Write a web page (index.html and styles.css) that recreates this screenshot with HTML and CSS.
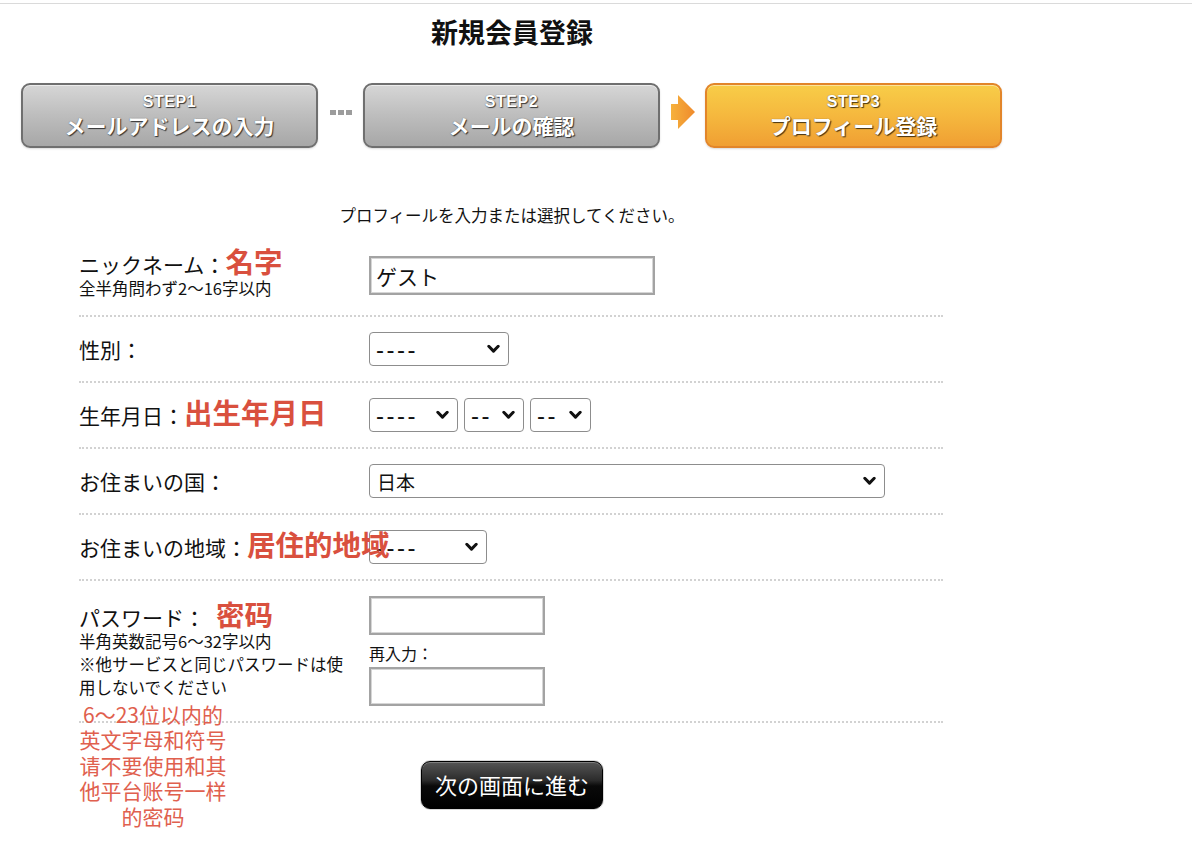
FILE: index.html
```html
<!DOCTYPE html>
<html lang="ja">
<head>
<meta charset="utf-8">
<title>新規会員登録</title>
<link rel="stylesheet" href="styles.css">
</head>
<body>
<div class="topline"></div>
<div class="page">
  <h1 class="title">新規会員登録</h1>

  <div class="steps">
    <div class="step">
      <span class="step-no">STEP1</span>
      <span class="step-name">メールアドレスの入力</span>
    </div>
    <div class="sep sep-dots"><i></i><i></i><i></i></div>
    <div class="step">
      <span class="step-no">STEP2</span>
      <span class="step-name">メールの確認</span>
    </div>
    <div class="sep sep-arrow">
      <svg width="24" height="34" viewBox="0 0 24 34">
        <defs>
          <linearGradient id="ag" x1="0" y1="0" x2="1" y2="0">
            <stop offset="0" stop-color="#f6b13c"/>
            <stop offset="1" stop-color="#ef8a2c"/>
          </linearGradient>
        </defs>
        <path d="M0 9 H7 V0 L24 17 L7 34 V25 H0 Z" fill="url(#ag)"/>
      </svg>
    </div>
    <div class="step step-active">
      <span class="step-no">STEP3</span>
      <span class="step-name">プロフィール登録</span>
    </div>
  </div>

  <p class="lead">プロフィールを入力または選択してください。</p>

  <div class="form">
    <div class="row">
      <div class="label">
        <div class="label-main">ニックネーム：<span class="note">名字</span></div>
        <div class="label-sub">全半角問わず2〜16字以内</div>
      </div>
      <div class="field">
        <input class="text text-nick" type="text" value="ゲスト">
      </div>
    </div>

    <div class="row">
      <div class="label">
        <div class="label-main">性別：</div>
      </div>
      <div class="field">
        <span class="sel">
          <select class="select dash w-140"><option>----</option></select>
          <svg class="chev" width="13" height="9" viewBox="0 0 13 9"><path d="M1.8 1.8 L6.5 6.6 L11.2 1.8" fill="none" stroke="#111" stroke-width="3" stroke-linecap="round" stroke-linejoin="round"/></svg>
        </span>
      </div>
    </div>

    <div class="row">
      <div class="label">
        <div class="label-main">生年月日：<span class="note">出生年月日</span></div>
      </div>
      <div class="field field-inline">
        <span class="sel">
          <select class="select dash w-89"><option>----</option></select>
          <svg class="chev" width="13" height="9" viewBox="0 0 13 9"><path d="M1.8 1.8 L6.5 6.6 L11.2 1.8" fill="none" stroke="#111" stroke-width="3" stroke-linecap="round" stroke-linejoin="round"/></svg>
        </span>
        <span class="sel">
          <select class="select dash w-60"><option>--</option></select>
          <svg class="chev" width="13" height="9" viewBox="0 0 13 9"><path d="M1.8 1.8 L6.5 6.6 L11.2 1.8" fill="none" stroke="#111" stroke-width="3" stroke-linecap="round" stroke-linejoin="round"/></svg>
        </span>
        <span class="sel">
          <select class="select dash w-61"><option>--</option></select>
          <svg class="chev" width="13" height="9" viewBox="0 0 13 9"><path d="M1.8 1.8 L6.5 6.6 L11.2 1.8" fill="none" stroke="#111" stroke-width="3" stroke-linecap="round" stroke-linejoin="round"/></svg>
        </span>
      </div>
    </div>

    <div class="row">
      <div class="label">
        <div class="label-main">お住まいの国：</div>
      </div>
      <div class="field">
        <span class="sel">
          <select class="select w-516"><option>日本</option></select>
          <svg class="chev" width="13" height="9" viewBox="0 0 13 9"><path d="M1.8 1.8 L6.5 6.6 L11.2 1.8" fill="none" stroke="#111" stroke-width="3" stroke-linecap="round" stroke-linejoin="round"/></svg>
        </span>
      </div>
    </div>

    <div class="row">
      <div class="label">
        <div class="label-main">お住まいの地域：<span class="note">居住的地域</span></div>
      </div>
      <div class="field">
        <span class="sel">
          <select class="select dash w-118"><option>----</option></select>
          <svg class="chev" width="13" height="9" viewBox="0 0 13 9"><path d="M1.8 1.8 L6.5 6.6 L11.2 1.8" fill="none" stroke="#111" stroke-width="3" stroke-linecap="round" stroke-linejoin="round"/></svg>
        </span>
      </div>
    </div>

    <div class="row">
      <div class="label">
        <div class="label-main">パスワード：<span class="note note-gap">密码</span></div>
        <div class="label-sub">半角英数記号6〜32字以内</div>
        <div class="label-sub">※他サービスと同じパスワードは使用しないでください</div>
        <div class="note-block" lang="zh-CN">
          <div class="note-line">6〜23位以内的</div>
          <div class="note-line">英文字母和符号</div>
          <div class="note-line">请不要使用和其</div>
          <div class="note-line">他平台账号一样</div>
          <div class="note-line">的密码</div>
        </div>
      </div>
      <div class="field field-stack">
        <input class="text text-pass" type="password">
        <span class="field-caption">再入力：</span>
        <input class="text text-pass" type="password">
      </div>
    </div>
  </div>

  <div class="submit-wrap">
    <button class="submit" type="button">次の画面に進む</button>
  </div>
</div>
</body>
</html>
```

FILE: styles.css
```css
html, body {
  margin: 0;
  padding: 0;
  background: #fff;
}

body {
  font-family: "Noto Sans CJK JP", "Noto Sans", sans-serif;
  color: #111;
}

.topline {
  margin-top: 3px;
  height: 1px;
  background: #dadada;
}

.page {
  width: 1024px;
  text-align: center;
}

.title {
  margin: 10px 0 0;
  font-size: 27px;
  line-height: 36px;
  font-weight: 700;
  color: #111;
}

/* steps */
.steps {
  margin-top: 33px;
  padding: 0 21px;
  display: flex;
  align-items: center;
}

.step {
  box-sizing: border-box;
  width: 297px;
  height: 65px;
  border: 2px solid #6f6f6f;
  border-radius: 9px;
  background: linear-gradient(to bottom, #d6d6d6 0%, #bdbdbd 50%, #a7a7a7 100%);
  box-shadow: inset 0 1px 0 rgba(255, 255, 255, 0.55), 0 1px 2px rgba(0, 0, 0, 0.15);
  display: flex;
  flex-direction: column;
  align-items: center;
  justify-content: center;
  color: #fff;
  text-shadow: 1px 1px 1px rgba(0, 0, 0, 0.7), 0 0 1px rgba(0, 0, 0, 0.5);
}

.step-active {
  border-color: #e2852a;
  background: linear-gradient(to bottom, #f8cd48 0%, #f5b83e 50%, #f09f33 100%);
  box-shadow: inset 0 1px 0 rgba(255, 255, 255, 0.45), 0 1px 2px rgba(0, 0, 0, 0.15);
}

.step-no {
  font-family: "Liberation Sans", Arial, sans-serif;
  font-weight: 700;
  font-size: 16px;
  line-height: 18px;
  letter-spacing: 0.6px;
}

.step-name {
  font-weight: 700;
  font-size: 21px;
  line-height: 27px;
  margin-top: 1px;
}

.sep {
  width: 45px;
  display: flex;
  justify-content: center;
  align-items: center;
}

.sep-dots {
  gap: 2px;
  padding-bottom: 7px;
}

.sep-dots i {
  display: block;
  width: 6px;
  height: 5px;
  background: #9c9c9c;
}

.sep-arrow svg {
  display: block;
  margin-bottom: 7px;
}

/* lead */
.lead {
  margin: 55px 0 9px;
  font-size: 16.5px;
  line-height: 24px;
  color: #111;
}

/* form */
.form {
  margin-left: 79px;
  width: 864px;
  text-align: left;
}

.row {
  display: flex;
  align-items: center;
  padding: 15px 0;
  border-bottom: 2px dotted #d2d2d2;
}

.label {
  position: relative;
  flex: none;
  width: 290px;
  min-width: 0;
  box-sizing: border-box;
  padding-right: 20px;
}

.label-main {
  font-size: 21px;
  line-height: 26px;
  white-space: nowrap;
  color: #111;
}

.label-sub {
  font-size: 16.5px;
  line-height: 23px;
  color: #111;
}

.note {
  position: relative;
  z-index: 1;
  font-size: 28.5px;
  line-height: 20px;
  font-weight: 700;
  color: #d9503e;
  font-family: "Noto Sans CJK SC", "Noto Sans CJK JP", sans-serif;
}

.note-gap {
  margin-left: 11px;
}

.note-block {
  position: absolute;
  top: 100%;
  left: 0;
  z-index: 1;
  width: 148px;
  margin-top: 3px;
  text-align: center;
  font-family: "Noto Sans CJK SC", "Noto Sans CJK JP", sans-serif;
  font-size: 21px;
  color: #e0604e;
  white-space: nowrap;
}

.note-line {
  height: 25.5px;
  line-height: 25.5px;
}

.field {
  display: flex;
  align-items: center;
}

.field-inline {
  gap: 6px;
}

.field-stack {
  flex-direction: column;
  align-items: flex-start;
}

.field-caption {
  font-size: 16px;
  line-height: 24px;
  padding: 6px 0 2px;
  color: #111;
}

.text {
  box-sizing: border-box;
  height: 39px;
  border: 2px solid #a3a3a3;
  box-shadow: inset 0 0 0 1px #d6d6d6;
  background: #fff;
  padding: 0 5px;
  margin: 0;
  font-family: "Noto Sans CJK JP", sans-serif;
  font-size: 21px;
  color: #111;
  outline: none;
}

.text-nick {
  width: 286px;
}

.text-pass {
  width: 176px;
}

.sel {
  position: relative;
  display: inline-block;
}

.select {
  display: block;
  box-sizing: border-box;
  height: 34px;
  margin: 0;
  padding: 0 20px 0 7px;
  border: 1px solid #8d8d8d;
  border-radius: 4px;
  background: #fff;
  -webkit-appearance: none;
  appearance: none;
  font-family: "Noto Sans CJK JP", sans-serif;
  font-size: 19px;
  color: #111;
  outline: none;
}

.dash {
  font-family: "Liberation Sans", Arial, sans-serif;
  font-size: 24px;
  letter-spacing: 2.5px;
  padding-left: 6px;
}

.chev {
  position: absolute;
  right: 9px;
  top: 50%;
  transform: translateY(-50%);
  pointer-events: none;
}

.w-140 { width: 140px; }
.w-89 { width: 89px; }
.w-60 { width: 60px; }
.w-61 { width: 61px; }
.w-516 { width: 516px; }
.w-118 { width: 118px; }

/* submit */
.submit-wrap {
  margin-top: 38px;
  padding-bottom: 40px;
}

.submit {
  box-sizing: border-box;
  width: 182px;
  height: 48px;
  border: 1px solid #000;
  border-radius: 9px;
  background: linear-gradient(to bottom, #555 0%, #2b2b2b 40%, #0a0a0a 52%, #000 100%);
  box-shadow: 0 0 0 1px #d8d8d8, inset 0 1px 0 rgba(255, 255, 255, 0.25);
  color: #fff;
  font-family: "Noto Sans CJK JP", sans-serif;
  font-size: 22px;
  line-height: 1;
  padding: 0 0 2px;
  cursor: pointer;
}
```
